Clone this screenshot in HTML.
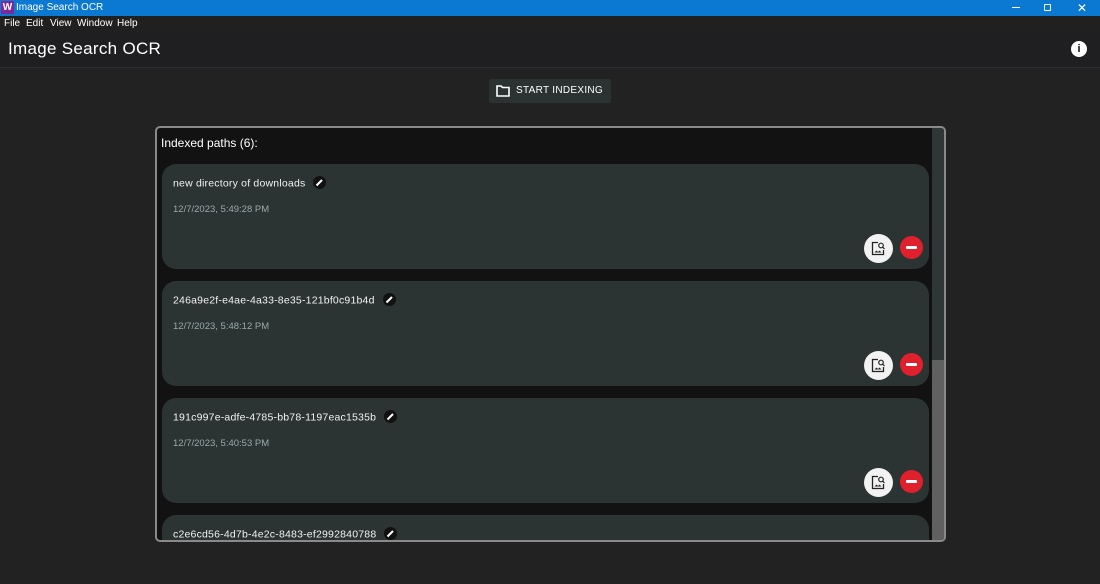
<!DOCTYPE html><html><head><style>
*{margin:0;padding:0;box-sizing:border-box}
html,body{width:1100px;height:584px;overflow:hidden}
body{background:#222222;font-family:"Liberation Sans",sans-serif;color:#eee;position:relative}
.tb{position:absolute;left:0;top:0;width:1100px;height:16px;background:#0b78d2;color:#fff;font-size:10px}
.mb{position:absolute;top:16px;left:0;width:1100px;height:16px;background:#202020;font-size:10px;color:#fff}
.hd{position:absolute;top:32px;left:0;width:1100px;height:36px;background:#1f1f21;border-bottom:1px solid #2e2e2e}
.btn{position:absolute;left:489px;top:79px;width:122px;height:24px;background:#2a3232;border-radius:2px;font-size:10px;color:#fff;letter-spacing:.3px}
.panel{position:absolute;left:155px;top:126px;width:791px;height:416px;border:2px solid #8a8a8a;border-radius:5px;background:#121212;overflow:hidden}
.card{position:absolute;left:5px;width:767px;height:105px;background:#2b3333;border-radius:14px}
.name{position:absolute;left:11px;top:13px;font-size:10.5px;color:#f2f2f2;letter-spacing:.2px}
.date{position:absolute;left:11px;top:40px;font-size:9.5px;color:#9aa}
.pen{display:inline-block;width:13px;height:13px;border-radius:7px;background:#111;vertical-align:middle;margin-left:8px;position:relative;top:-1px}
.pen svg{position:absolute;left:2px;top:2px}
.b1{position:absolute;right:36px;bottom:6px;width:29px;height:29px;border-radius:50%;background:#f2f2f2}
.b1 svg{position:absolute;left:7px;top:7px}
.b2{position:absolute;right:6px;bottom:10px;width:23px;height:23px;border-radius:50%;background:#e0202c}
.b2:after{content:"";position:absolute;left:6px;top:10px;width:11px;height:3px;background:#fff;border-radius:1px}
.sb{position:absolute;right:0;top:0;width:12px;height:412px;background:#606060}
.th{position:absolute;right:0;top:0;width:12px;height:232px;background:#2e3636}
</style></head><body>
<div class="tb"><span style="position:absolute;left:1px;top:1px;width:13px;height:13px;background:#7a2a9c;color:#fff;font-size:10px;text-align:center;line-height:13px;font-weight:bold">W</span><span style="position:absolute;left:16px;top:2px">Image Search OCR</span>
<span style="position:absolute;left:1012px;top:7px;width:8px;height:1px;background:#fff"></span>
<span style="position:absolute;left:1044px;top:4px;width:7px;height:7px;border:1.5px solid #fff;border-radius:1px"></span>
<span style="position:absolute;left:1077px;top:1px;font-size:12px">✕</span></div>
<div class="mb"><span style="position:absolute;left:4px;top:2px">File</span><span style="position:absolute;left:26px;top:2px">Edit</span><span style="position:absolute;left:50px;top:2px">View</span><span style="position:absolute;left:77px;top:2px">Window</span><span style="position:absolute;left:117px;top:2px">Help</span></div>
<div class="hd"><span style="position:absolute;left:8px;top:7px;font-size:17px;color:#fff;letter-spacing:.3px">Image Search OCR</span>
<span style="position:absolute;left:1071px;top:9px;width:16px;height:16px;border-radius:50%;background:#fff;color:#111;font-size:11px;font-weight:bold;text-align:center;line-height:16px">i</span></div>
<div class="btn"><svg style="position:absolute;left:7px;top:6px" width="14" height="12" viewBox="0 0 14 12"><path d="M1 1h4l1.5 1.5H13V11H1z" fill="none" stroke="#fff" stroke-width="1.6"/></svg><span style="position:absolute;left:27px;top:6px">START INDEXING</span></div>
<div class="panel">
<div style="position:absolute;left:4px;top:8px;font-size:12px;color:#fff">Indexed paths (6):</div>
<div class="card" style="top:36px"><div class="name">new directory of downloads<span class="pen"><svg width="9" height="9" viewBox="0 0 9 9"><path d="M1.5 7.5L7 2" stroke="#fff" stroke-width="2"/></svg></span></div><div class="date">12/7/2023, 5:49:28 PM</div><div class="b1"><svg width="15" height="15" viewBox="0 0 15 15"><path d="M7 1.5H1.5v12h11V9" fill="none" stroke="#222" stroke-width="1.3"/><circle cx="10" cy="4.5" r="2.3" fill="none" stroke="#222" stroke-width="1.2"/><path d="M11.7 6.2L13.5 8" stroke="#222" stroke-width="1.2"/><path d="M3.5 11.5l2-2 1.5 1.5 1.5-1.5 2 2z" fill="#222"/></svg></div><div class="b2"></div></div>
<div class="card" style="top:153px"><div class="name">246a9e2f-e4ae-4a33-8e35-121bf0c91b4d<span class="pen"><svg width="9" height="9" viewBox="0 0 9 9"><path d="M1.5 7.5L7 2" stroke="#fff" stroke-width="2"/></svg></span></div><div class="date">12/7/2023, 5:48:12 PM</div><div class="b1"><svg width="15" height="15" viewBox="0 0 15 15"><path d="M7 1.5H1.5v12h11V9" fill="none" stroke="#222" stroke-width="1.3"/><circle cx="10" cy="4.5" r="2.3" fill="none" stroke="#222" stroke-width="1.2"/><path d="M11.7 6.2L13.5 8" stroke="#222" stroke-width="1.2"/><path d="M3.5 11.5l2-2 1.5 1.5 1.5-1.5 2 2z" fill="#222"/></svg></div><div class="b2"></div></div>
<div class="card" style="top:270px"><div class="name">191c997e-adfe-4785-bb78-1197eac1535b<span class="pen"><svg width="9" height="9" viewBox="0 0 9 9"><path d="M1.5 7.5L7 2" stroke="#fff" stroke-width="2"/></svg></span></div><div class="date">12/7/2023, 5:40:53 PM</div><div class="b1"><svg width="15" height="15" viewBox="0 0 15 15"><path d="M7 1.5H1.5v12h11V9" fill="none" stroke="#222" stroke-width="1.3"/><circle cx="10" cy="4.5" r="2.3" fill="none" stroke="#222" stroke-width="1.2"/><path d="M11.7 6.2L13.5 8" stroke="#222" stroke-width="1.2"/><path d="M3.5 11.5l2-2 1.5 1.5 1.5-1.5 2 2z" fill="#222"/></svg></div><div class="b2"></div></div>
<div class="card" style="top:387px"><div class="name">c2e6cd56-4d7b-4e2c-8483-ef2992840788<span class="pen"><svg width="9" height="9" viewBox="0 0 9 9"><path d="M1.5 7.5L7 2" stroke="#fff" stroke-width="2"/></svg></span></div></div>
<div class="sb"></div><div class="th"></div>
</div>
</body></html>
